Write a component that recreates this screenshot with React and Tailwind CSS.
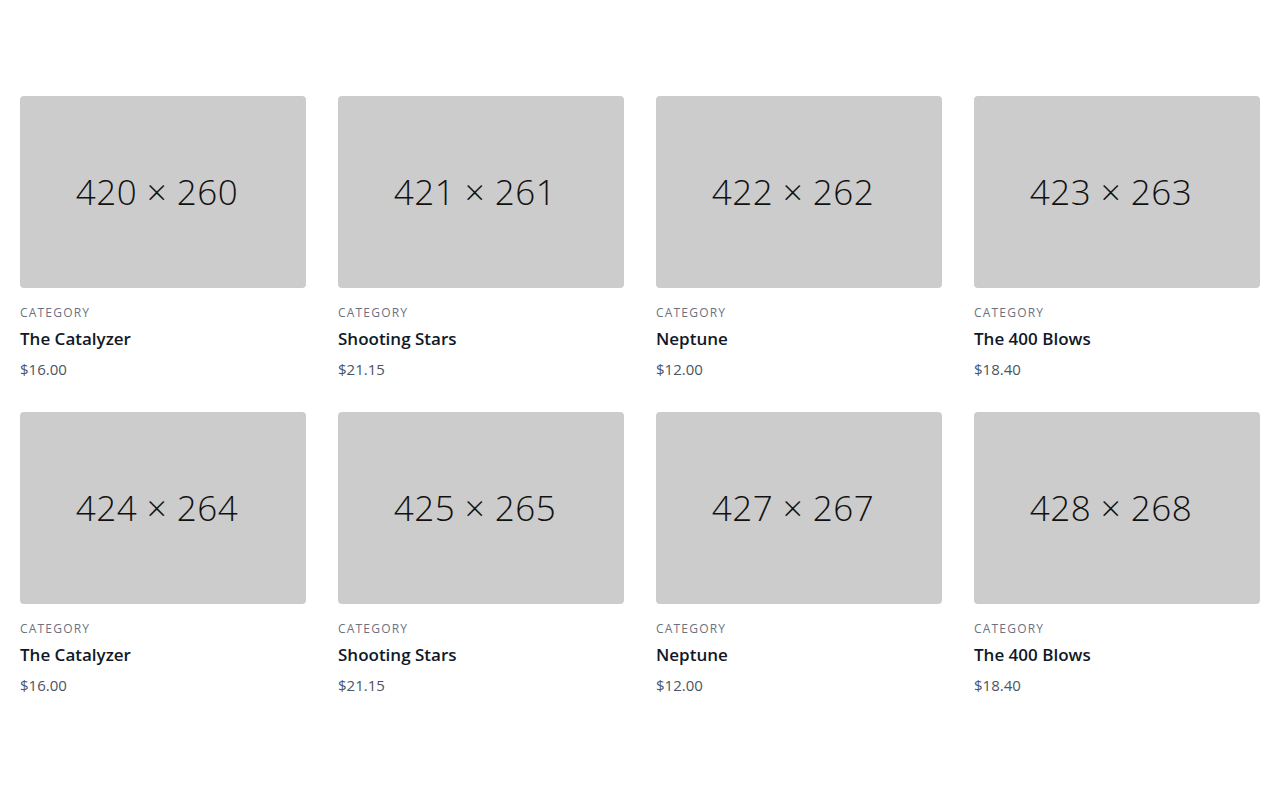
const products = [
  { size: "420 × 260", title: "The Catalyzer", price: "$16.00" },
  { size: "421 × 261", title: "Shooting Stars", price: "$21.15" },
  { size: "422 × 262", title: "Neptune", price: "$12.00" },
  { size: "423 × 263", title: "The 400 Blows", price: "$18.40" },
  { size: "424 × 264", title: "The Catalyzer", price: "$16.00" },
  { size: "425 × 265", title: "Shooting Stars", price: "$21.15" },
  { size: "427 × 267", title: "Neptune", price: "$12.00" },
  { size: "428 × 268", title: "The 400 Blows", price: "$18.40" },
];

export default function App() {
  return (
    <section className="bg-white text-gray-600 font-['Open_Sans',sans-serif]">
      <div className="px-5 py-24 mx-auto">
        <div className="grid grid-cols-4 gap-x-8 gap-y-8">
          {products.map((p, i) => (
            <div key={i}>
              {/* placeholder image */}
              <div className="h-48 rounded bg-[#cccccc] flex items-center justify-center pr-3">
                <span className="text-[35px] font-light text-[#111111] tracking-[0.5px]">{p.size}</span>
              </div>
              <div className="mt-[17px]">
                <h3 className="text-gray-500 text-xs tracking-widest mb-1">CATEGORY</h3>
                <h2 className="text-gray-900 text-[17px] leading-7 font-semibold">{p.title}</h2>
                <p className="mt-[5px] text-[15px] leading-[22px]">{p.price}</p>
              </div>
            </div>
          ))}
        </div>
      </div>
    </section>
  );
}
